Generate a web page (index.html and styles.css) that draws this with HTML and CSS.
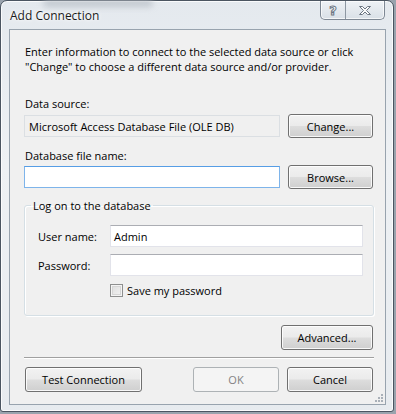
FILE: index.html
```html
<!DOCTYPE html>
<html>
<head>
<meta charset="utf-8">
<link rel="stylesheet" href="styles.css">
</head>
<body>
<div class="window">
  <div class="titlebar">
    <div class="ghost"></div>
    <span class="title">Add Connection</span>
    <div class="caption-btns">
      <div class="cap help"><span>?</span></div>
      <div class="cap close">
        <svg width="14" height="11" viewBox="0 0 14 11"><path d="M1.5 1.5h3l2.5 2.5 2.5-2.5h3l-4 4 4 4h-3l-2.5-2.5-2.5 2.5h-3l4-4z" fill="#fdfdfd" stroke="#6c7682" stroke-width="1"/></svg>
      </div>
    </div>
  </div>
  <div class="client">
    <p class="intro">Enter information to connect to the selected data source or click<br>"Change" to choose a different data source and/or provider.</p>
    <div class="lbl">Data source:</div>
    <div class="row">
      <div class="readonly">Microsoft Access Database File (OLE DB)</div>
      <div class="btn">Change...</div>
    </div>
    <div class="lbl lbl2">Database file name:</div>
    <div class="row row2">
      <div class="tb focus"></div>
      <div class="btn">Browse...</div>
    </div>
    <fieldset class="group">
      <legend>Log on to the database</legend>
      <div class="field"><span class="flabel">User name:</span><div class="tb plain">Admin</div></div>
      <div class="field"><span class="flabel">Password:</span><div class="tb plain"></div></div>
      <div class="check"><span class="box"></span><span>Save my password</span></div>
    </fieldset>
    <div class="adv-row"><div class="btn adv">Advanced...</div></div>
    <div class="sep"></div>
    <div class="footer">
      <div class="btn test">Test Connection</div>
      <div class="spacer"></div>
      <div class="btn disabled">OK</div>
      <div class="btn">Cancel</div>
    </div>
    <div class="grip">
      <svg width="9" height="9" viewBox="0 0 9 9"><g fill="#a9b0b8"><rect x="7" y="1" width="2" height="2"/><rect x="4" y="4" width="2" height="2"/><rect x="7" y="4" width="2" height="2"/><rect x="1" y="7" width="2" height="2"/><rect x="4" y="7" width="2" height="2"/><rect x="7" y="7" width="2" height="2"/></g></svg>
    </div>
  </div>
</div>
</body>
</html>
```

FILE: styles.css
```css
html, body {
  margin: 0;
  padding: 0;
}
body {
  width: 396px;
  height: 414px;
  background: #9aa3ad;
  font-family: "Open Sans", "Noto Sans", sans-serif;
  font-size: 11px;
  color: #000;
  overflow: hidden;
}
.window {
  width: 394px;
  height: 412px;
  border: 1px solid #4b5561;
  border-radius: 7px 7px 3px 3px;
  background: linear-gradient(180deg, #e4e9ee 0%, #eef1f4 40%, #e7ebef 100%);
  box-shadow: inset 0 0 0 1px rgba(255,255,255,0.8);
  padding: 0 7px 6px 8px;
  box-sizing: border-box;
  display: flex;
  flex-direction: column;
}
.titlebar {
  height: 28px;
  position: relative;
  display: flex;
  align-items: flex-start;
  flex-shrink: 0;
}
.ghost {
  position: absolute;
  left: 34px;
  top: -2px;
  width: 110px;
  height: 8px;
  border-radius: 4px;
  background: #b4bbc3;
  filter: blur(3px);
  opacity: 0.7;
}
.title {
  position: relative;
  margin: 6px 0 0 1px;
  font-size: 12px;
  color: #1b1b1b;
  text-shadow: 0 0 6px #fff, 0 0 3px #fff;
}
.caption-btns {
  margin-left: auto;
  margin-right: 1px;
  display: flex;
  height: 18px;
  border: 1px solid #7e8894;
  border-top: none;
  border-radius: 0 0 5px 5px;
  overflow: hidden;
  background: linear-gradient(180deg, #eef2f6 0%, #e4e9ee 50%, #d9e0e7 100%);
  box-shadow: inset 0 0 0 1px rgba(255,255,255,0.7);
}
.cap {
  display: flex;
  align-items: center;
  justify-content: center;
}
.help {
  width: 24px;
  border-right: 1px solid #8d97a2;
}
.help span {
  font-family: "DejaVu Sans", sans-serif;
  font-size: 13px;
  font-weight: bold;
  color: #fff;
  -webkit-text-stroke: 1px #6c7682;
  line-height: 1;
}
.close {
  width: 38px;
}
.client {
  flex: 1;
  background: #f0f0f0;
  border: 1px solid #98a3ae;
  padding: 0 12px 0 14px;
  position: relative;
  display: flex;
  flex-direction: column;
}
.intro {
  margin: 14px 0 0 1px;
  line-height: 15px;
}
.lbl {
  margin: 22px 0 0 1px;
  line-height: 15px;
}
.lbl2 {
  margin-top: 10px;
}
.row {
  display: flex;
  align-items: center;
  gap: 8px;
  margin-top: 3px;
}
.row2 {
  margin-top: 2px;
}
.readonly {
  width: 256px;
  height: 22px;
  box-sizing: border-box;
  border: 1px solid #dbdfe3;
  background: #f0f0f0;
  padding: 0 4px;
  display: flex;
  align-items: center;
}
.tb {
  height: 22px;
  box-sizing: border-box;
  background: #fff;
  border: 1px solid #e2e3ea;
  border-top-color: #abadb3;
  padding: 0 3px;
  display: flex;
  align-items: center;
}
.tb.focus {
  width: 256px;
  border-color: #7eb4ea;
  border-top-color: #569de5;
}
.btn {
  width: 85px;
  height: 24px;
  box-sizing: border-box;
  border: 1px solid #707070;
  border-radius: 3px;
  background: linear-gradient(180deg, #f2f2f2 0%, #ebebeb 48%, #dddddd 52%, #cfcfcf 100%);
  box-shadow: inset 0 0 0 1px rgba(255,255,255,0.85);
  display: flex;
  align-items: center;
  justify-content: center;
  flex-shrink: 0;
}
.group {
  margin: 9px 0 0 0;
  padding: 12px 10px 17px 13px;
  border: 1px solid #d5dfe5;
  border-radius: 3px;
  box-shadow: inset 1px 1px 0 #fff, 1px 1px 0 #fff;
  min-width: 0;
  width: 350px;
  box-sizing: border-box;
}
.group legend {
  padding: 0 2px;
  margin-left: -7px;
  line-height: 15px;
}
.field {
  display: flex;
  align-items: center;
  margin-bottom: 7px;
}
.flabel {
  width: 72px;
  flex-shrink: 0;
}
.tb.plain {
  flex: 1;
}
.check {
  display: flex;
  align-items: center;
  gap: 4px;
  margin-left: 72px;
  margin-top: 1px;
}
.box {
  width: 13px;
  height: 13px;
  box-sizing: border-box;
  border: 1px solid #8e8f8f;
  background: linear-gradient(135deg, #dcdcdc 0%, #f4f4f4 100%);
  box-shadow: inset 0 0 0 1px #f4f4f4, inset 0 0 0 2px #d6d6d6;
}
.adv-row {
  display: flex;
  justify-content: flex-end;
  margin-top: 9px;
}
.btn.adv {
  width: 92px;
  height: 25px;
}
.sep {
  margin-top: 7px;
  height: 1px;
  background: #a0a0a0;
  box-shadow: 0 1px 0 #fff;
  width: 350px;
}
.footer {
  display: flex;
  margin-top: 9px;
  gap: 8px;
}
.footer .btn {
  height: 25px;
  width: 86px;
}
.btn.test {
  width: 117px;
  margin-left: 1px;
}
.spacer {
  flex: 1;
}
.btn.disabled {
  border-color: #adb2b5;
  background: #f4f4f4;
  box-shadow: none;
  color: #838383;
}
.grip {
  position: absolute;
  right: 2px;
  bottom: 2px;
  width: 9px;
  height: 9px;
  display: flex;
}
```
